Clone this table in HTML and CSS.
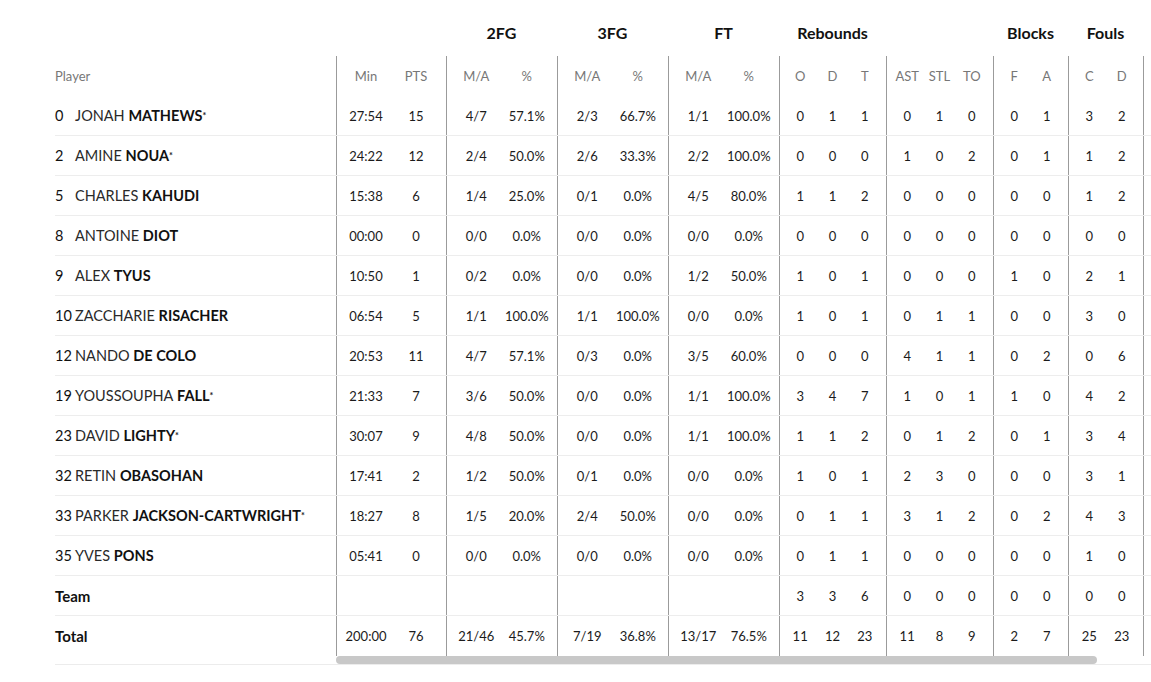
FILE: index.html
```html
<!DOCTYPE html>
<html lang="en">
<head>
<meta charset="utf-8">
<title>Box score</title>
<link rel="stylesheet" href="styles.css">
</head>
<body>
<div class="boxscore">
  <div class="fixed">
    <div class="row group"></div>
    <div class="row head"><span class="label">Player</span></div>
    <div class="row line"><span class="num">0</span><span class="first">JONAH</span>&nbsp;<b>MATHEWS</b><sup class="star">*</sup></div>
    <div class="row line"><span class="num">2</span><span class="first">AMINE</span>&nbsp;<b>NOUA</b><sup class="star">*</sup></div>
    <div class="row line"><span class="num">5</span><span class="first">CHARLES</span>&nbsp;<b>KAHUDI</b></div>
    <div class="row line"><span class="num">8</span><span class="first">ANTOINE</span>&nbsp;<b>DIOT</b></div>
    <div class="row line"><span class="num">9</span><span class="first">ALEX</span>&nbsp;<b>TYUS</b></div>
    <div class="row line"><span class="num">10</span><span class="first">ZACCHARIE</span>&nbsp;<b>RISACHER</b></div>
    <div class="row line"><span class="num">12</span><span class="first">NANDO</span>&nbsp;<b>DE COLO</b></div>
    <div class="row line"><span class="num">19</span><span class="first">YOUSSOUPHA</span>&nbsp;<b>FALL</b><sup class="star">*</sup></div>
    <div class="row line"><span class="num">23</span><span class="first">DAVID</span>&nbsp;<b>LIGHTY</b><sup class="star">*</sup></div>
    <div class="row line"><span class="num">32</span><span class="first">RETIN</span>&nbsp;<b>OBASOHAN</b></div>
    <div class="row line"><span class="num">33</span><span class="first">PARKER</span>&nbsp;<b>JACKSON-CARTWRIGHT</b><sup class="star">*</sup></div>
    <div class="row line"><span class="num">35</span><span class="first">YVES</span>&nbsp;<b>PONS</b></div>
    <div class="row line"><b class="sum">Team</b></div>
    <div class="row total"><b class="sum">Total</b></div>
  </div>

  <div class="scroll">
    <div class="viewport">
    <div class="sheet">
      <div class="row group">
        <div class="g w110"></div>
        <div class="g w111">2FG</div>
        <div class="g w111">3FG</div>
        <div class="g w111">FT</div>
        <div class="g w107">Rebounds</div>
        <div class="g w107"></div>
        <div class="g w75">Blocks</div>
        <div class="g w75">Fouls</div>
        <div class="g wend"></div>
      </div>
      <div class="row head">
        <div class="g w110"><span>Min</span><span>PTS</span></div>
        <div class="g w111"><span>M/A</span><span>%</span></div>
        <div class="g w111"><span>M/A</span><span>%</span></div>
        <div class="g w111"><span>M/A</span><span>%</span></div>
        <div class="g w107"><span>O</span><span>D</span><span>T</span></div>
        <div class="g w107"><span>AST</span><span>STL</span><span>TO</span></div>
        <div class="g w75"><span>F</span><span>A</span></div>
        <div class="g w75"><span>C</span><span>D</span></div>
        <div class="g wend"></div>
      </div>
      <div class="row line">
        <div class="g w110"><span>27:54</span><span>15</span></div>
        <div class="g w111"><span>4/7</span><span>57.1%</span></div>
        <div class="g w111"><span>2/3</span><span>66.7%</span></div>
        <div class="g w111"><span>1/1</span><span>100.0%</span></div>
        <div class="g w107"><span>0</span><span>1</span><span>1</span></div>
        <div class="g w107"><span>0</span><span>1</span><span>0</span></div>
        <div class="g w75"><span>0</span><span>1</span></div>
        <div class="g w75"><span>3</span><span>2</span></div>
        <div class="g wend"></div>
      </div>
      <div class="row line">
        <div class="g w110"><span>24:22</span><span>12</span></div>
        <div class="g w111"><span>2/4</span><span>50.0%</span></div>
        <div class="g w111"><span>2/6</span><span>33.3%</span></div>
        <div class="g w111"><span>2/2</span><span>100.0%</span></div>
        <div class="g w107"><span>0</span><span>0</span><span>0</span></div>
        <div class="g w107"><span>1</span><span>0</span><span>2</span></div>
        <div class="g w75"><span>0</span><span>1</span></div>
        <div class="g w75"><span>1</span><span>2</span></div>
        <div class="g wend"></div>
      </div>
      <div class="row line">
        <div class="g w110"><span>15:38</span><span>6</span></div>
        <div class="g w111"><span>1/4</span><span>25.0%</span></div>
        <div class="g w111"><span>0/1</span><span>0.0%</span></div>
        <div class="g w111"><span>4/5</span><span>80.0%</span></div>
        <div class="g w107"><span>1</span><span>1</span><span>2</span></div>
        <div class="g w107"><span>0</span><span>0</span><span>0</span></div>
        <div class="g w75"><span>0</span><span>0</span></div>
        <div class="g w75"><span>1</span><span>2</span></div>
        <div class="g wend"></div>
      </div>
      <div class="row line">
        <div class="g w110"><span>00:00</span><span>0</span></div>
        <div class="g w111"><span>0/0</span><span>0.0%</span></div>
        <div class="g w111"><span>0/0</span><span>0.0%</span></div>
        <div class="g w111"><span>0/0</span><span>0.0%</span></div>
        <div class="g w107"><span>0</span><span>0</span><span>0</span></div>
        <div class="g w107"><span>0</span><span>0</span><span>0</span></div>
        <div class="g w75"><span>0</span><span>0</span></div>
        <div class="g w75"><span>0</span><span>0</span></div>
        <div class="g wend"></div>
      </div>
      <div class="row line">
        <div class="g w110"><span>10:50</span><span>1</span></div>
        <div class="g w111"><span>0/2</span><span>0.0%</span></div>
        <div class="g w111"><span>0/0</span><span>0.0%</span></div>
        <div class="g w111"><span>1/2</span><span>50.0%</span></div>
        <div class="g w107"><span>1</span><span>0</span><span>1</span></div>
        <div class="g w107"><span>0</span><span>0</span><span>0</span></div>
        <div class="g w75"><span>1</span><span>0</span></div>
        <div class="g w75"><span>2</span><span>1</span></div>
        <div class="g wend"></div>
      </div>
      <div class="row line">
        <div class="g w110"><span>06:54</span><span>5</span></div>
        <div class="g w111"><span>1/1</span><span>100.0%</span></div>
        <div class="g w111"><span>1/1</span><span>100.0%</span></div>
        <div class="g w111"><span>0/0</span><span>0.0%</span></div>
        <div class="g w107"><span>1</span><span>0</span><span>1</span></div>
        <div class="g w107"><span>0</span><span>1</span><span>1</span></div>
        <div class="g w75"><span>0</span><span>0</span></div>
        <div class="g w75"><span>3</span><span>0</span></div>
        <div class="g wend"></div>
      </div>
      <div class="row line">
        <div class="g w110"><span>20:53</span><span>11</span></div>
        <div class="g w111"><span>4/7</span><span>57.1%</span></div>
        <div class="g w111"><span>0/3</span><span>0.0%</span></div>
        <div class="g w111"><span>3/5</span><span>60.0%</span></div>
        <div class="g w107"><span>0</span><span>0</span><span>0</span></div>
        <div class="g w107"><span>4</span><span>1</span><span>1</span></div>
        <div class="g w75"><span>0</span><span>2</span></div>
        <div class="g w75"><span>0</span><span>6</span></div>
        <div class="g wend"></div>
      </div>
      <div class="row line">
        <div class="g w110"><span>21:33</span><span>7</span></div>
        <div class="g w111"><span>3/6</span><span>50.0%</span></div>
        <div class="g w111"><span>0/0</span><span>0.0%</span></div>
        <div class="g w111"><span>1/1</span><span>100.0%</span></div>
        <div class="g w107"><span>3</span><span>4</span><span>7</span></div>
        <div class="g w107"><span>1</span><span>0</span><span>1</span></div>
        <div class="g w75"><span>1</span><span>0</span></div>
        <div class="g w75"><span>4</span><span>2</span></div>
        <div class="g wend"></div>
      </div>
      <div class="row line">
        <div class="g w110"><span>30:07</span><span>9</span></div>
        <div class="g w111"><span>4/8</span><span>50.0%</span></div>
        <div class="g w111"><span>0/0</span><span>0.0%</span></div>
        <div class="g w111"><span>1/1</span><span>100.0%</span></div>
        <div class="g w107"><span>1</span><span>1</span><span>2</span></div>
        <div class="g w107"><span>0</span><span>1</span><span>2</span></div>
        <div class="g w75"><span>0</span><span>1</span></div>
        <div class="g w75"><span>3</span><span>4</span></div>
        <div class="g wend"></div>
      </div>
      <div class="row line">
        <div class="g w110"><span>17:41</span><span>2</span></div>
        <div class="g w111"><span>1/2</span><span>50.0%</span></div>
        <div class="g w111"><span>0/1</span><span>0.0%</span></div>
        <div class="g w111"><span>0/0</span><span>0.0%</span></div>
        <div class="g w107"><span>1</span><span>0</span><span>1</span></div>
        <div class="g w107"><span>2</span><span>3</span><span>0</span></div>
        <div class="g w75"><span>0</span><span>0</span></div>
        <div class="g w75"><span>3</span><span>1</span></div>
        <div class="g wend"></div>
      </div>
      <div class="row line">
        <div class="g w110"><span>18:27</span><span>8</span></div>
        <div class="g w111"><span>1/5</span><span>20.0%</span></div>
        <div class="g w111"><span>2/4</span><span>50.0%</span></div>
        <div class="g w111"><span>0/0</span><span>0.0%</span></div>
        <div class="g w107"><span>0</span><span>1</span><span>1</span></div>
        <div class="g w107"><span>3</span><span>1</span><span>2</span></div>
        <div class="g w75"><span>0</span><span>2</span></div>
        <div class="g w75"><span>4</span><span>3</span></div>
        <div class="g wend"></div>
      </div>
      <div class="row line">
        <div class="g w110"><span>05:41</span><span>0</span></div>
        <div class="g w111"><span>0/0</span><span>0.0%</span></div>
        <div class="g w111"><span>0/0</span><span>0.0%</span></div>
        <div class="g w111"><span>0/0</span><span>0.0%</span></div>
        <div class="g w107"><span>0</span><span>1</span><span>1</span></div>
        <div class="g w107"><span>0</span><span>0</span><span>0</span></div>
        <div class="g w75"><span>0</span><span>0</span></div>
        <div class="g w75"><span>1</span><span>0</span></div>
        <div class="g wend"></div>
      </div>
      <div class="row line">
        <div class="g w110"></div>
        <div class="g w111"></div>
        <div class="g w111"></div>
        <div class="g w111"></div>
        <div class="g w107"><span>3</span><span>3</span><span>6</span></div>
        <div class="g w107"><span>0</span><span>0</span><span>0</span></div>
        <div class="g w75"><span>0</span><span>0</span></div>
        <div class="g w75"><span>0</span><span>0</span></div>
        <div class="g wend"></div>
      </div>
      <div class="row">
        <div class="g w110"><span>200:00</span><span>76</span></div>
        <div class="g w111"><span>21/46</span><span>45.7%</span></div>
        <div class="g w111"><span>7/19</span><span>36.8%</span></div>
        <div class="g w111"><span>13/17</span><span>76.5%</span></div>
        <div class="g w107"><span>11</span><span>12</span><span>23</span></div>
        <div class="g w107"><span>11</span><span>8</span><span>9</span></div>
        <div class="g w75"><span>2</span><span>7</span></div>
        <div class="g w75"><span>25</span><span>23</span></div>
        <div class="g wend"></div>
      </div>
    </div>
    </div>
    <div class="scrollbar"><div class="thumb"></div></div>
  </div>
</div>
</body>
</html>
```

FILE: styles.css
```css
* {
  box-sizing: border-box;
}

body {
  margin: 0;
  background: #fff;
  color: #1b1b1b;
  font-family: Lato, "Open Sans", "Liberation Sans", sans-serif;
  font-size: 13px;
}

.boxscore {
  display: flex;
  margin: 12px 0 0 55px;
  border-bottom: 1px solid #ececec;
}

.fixed {
  flex: none;
  width: 281px;
}

.scroll {
  flex: 1;
  min-width: 0;
  display: flex;
  flex-direction: column;
}

.viewport {
  overflow: hidden;
}

.scrollbar {
  height: 8px;
}

.thumb {
  width: 761px;
  height: 8px;
  background: #c8c8c8;
  border-radius: 4px;
}

.sheet {
  width: 873px;
}

.row {
  display: flex;
  align-items: center;
  height: 40px;
}

.row.group {
  height: 44px;
  padding-bottom: 3px;
}

.row.line {
  border-bottom: 1px solid #ededed;
}

.fixed .row {
  font-size: 14.5px;
}

.fixed .row.total {
  height: 48px;
  padding-bottom: 8px;
}

.label {
  color: #777;
  font-size: 13px;
}

.num {
  display: inline-block;
  width: 20px;
  color: #111;
}

.first {
  color: #2a2a2a;
}

.fixed b {
  font-weight: 700;
  color: #111;
}

.star {
  font-size: 9px;
  font-weight: 700;
  vertical-align: 6px;
  line-height: 0;
}

.sum {
  font-size: 15px;
}

.g {
  flex: none;
  display: flex;
  align-items: center;
  align-self: stretch;
  padding: 0 5px 0 4px;
  border-left: 1px solid #9b9b9b;
}

.g > span {
  flex: 1;
  text-align: center;
  white-space: nowrap;
}

.row.group .g {
  border-left-color: transparent;
  justify-content: center;
  font-size: 16px;
  font-weight: 700;
  color: #111;
}

.row.head .g {
  color: #777;
}

.w110 { width: 110px; }
.w111 { width: 111px; }
.w107 { width: 107px; }
.w75 { width: 75px; }
.wend { width: 66px; }
```
